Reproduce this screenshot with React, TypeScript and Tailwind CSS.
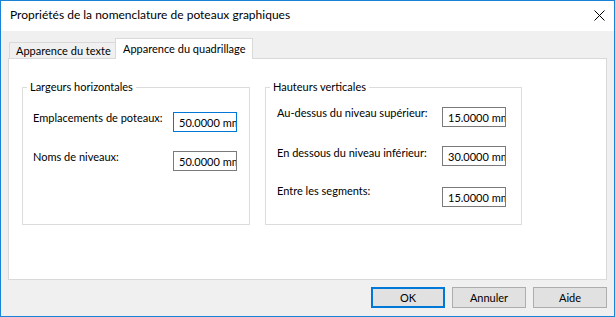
import React from 'react';

type Row = {
  label: string;
  value: string;
  rowClass: string;
  labelClass: string;
  focused?: boolean;
};

const leftRows: Row[] = [
  { label: "Emplacements de poteaux:", value: "50.0000 mm", rowClass: "mt-[17px]", labelClass: "-mt-[2px]", focused: true },
  { label: "Noms de niveaux:", value: "50.0000 mm", rowClass: "mt-[19px]", labelClass: "-mt-[2px]" },
];

const rightRows: Row[] = [
  { label: "Au-dessus du niveau supérieur:", value: "15.0000 mm", rowClass: "mt-[12px]", labelClass: "-mt-[2px]" },
  { label: "En dessous du niveau inférieur:", value: "30.0000 mm", rowClass: "mt-[19px]", labelClass: "-mt-[1px]" },
  { label: "Entre les segments:", value: "15.0000 mm", rowClass: "mt-[21px]", labelClass: "-mt-[4px]" },
];

function cn(...parts: (string | false | undefined)[]) {
  return parts.filter(Boolean).join(" ");
}

const GroupBox = ({
  title,
  rows,
  className,
  innerClass,
  labelWidth,
}: {
  title: string;
  rows: Row[];
  className: string;
  innerClass: string;
  labelWidth: string;
}) => (
  <fieldset className={`border border-[#dcdcdc] h-[146px] ${className}`}>
    <legend className="ml-[4px] px-[3px] leading-[16px]">{title}</legend>
    <div className={innerClass}>
      {rows.map((row) => (
        <div key={row.label} className={`flex items-start h-[20px] ${row.rowClass}`}>
          <span className={`leading-[16px] ${labelWidth} ${row.labelClass}`}>{row.label}</span>
          <input
            readOnly
            value={row.value}
            className={cn(
              "w-[64px] h-[20px] pl-[5px] pr-0 bg-white outline-none text-black leading-[16px]",
              row.focused ? "border border-[#0078d7]" : "border border-[#7a7a7a]"
            )}
          />
        </div>
      ))}
    </div>
  </fieldset>
);

const App = () => {
  return (
    <div
      className="w-[615px] h-[317px] flex flex-col border border-[#1883d7] bg-[#f0f0f0] text-[11px] text-black whitespace-nowrap overflow-hidden"
      style={{ fontFamily: 'Lato, "Segoe UI", sans-serif' }}
    >
      {/* Title bar */}
      <div className="h-[30px] bg-white flex items-start justify-between pl-[9px] pr-[9px] pt-[6px] shrink-0">
        <span className="leading-[16px] text-[12px]">Propriétés de la nomenclature de poteaux graphiques</span>
        <svg width="11" height="11" viewBox="0 0 11 11" className="mt-[3px]" stroke="#000" strokeWidth="1">
          <path d="M0.5 0.5 L10.5 10.5 M10.5 0.5 L0.5 10.5" />
        </svg>
      </div>

      {/* Body */}
      <div className="flex-1 flex flex-col px-[7px] pt-[7px]">
        {/* Tabs */}
        <div className="flex items-end h-[20px] ml-[1px]">
          <div className="h-[16px] w-[106px] border-l border-t border-[#d9d9d9] bg-[#f0f0f0] pl-[6px] flex items-center leading-[16px]">
            Apparence du texte
          </div>
          <div className="relative z-10 -mb-[1px] h-[21px] w-[138px] border-l border-r border-t border-[#d9d9d9] bg-white pl-[7px] pt-[2px] leading-[16px]">
            Apparence du quadrillage
          </div>
        </div>

        {/* Tab panel */}
        <div className="w-[599px] h-[222px] border border-[#d9d9d9] bg-white flex items-start pl-[13px] pt-[20px]">
          <GroupBox
            title="Largeurs horizontales"
            rows={leftRows}
            className="w-[228px]"
            innerClass="pl-[10px]"
            labelWidth="w-[140px]"
          />
          <GroupBox
            title="Hauteurs verticales"
            rows={rightRows}
            className="w-[257px] ml-[15px]"
            innerClass="pl-[11px]"
            labelWidth="w-[165px]"
          />
        </div>

        {/* Buttons */}
        <div className="flex justify-end gap-[7px] mt-[7px]">
          <button className="w-[74px] h-[21px] border-2 border-[#0078d7] bg-[#e1e1e1] leading-[16px]">OK</button>
          <button className="w-[74px] h-[21px] border border-[#adadad] bg-[#e1e1e1] leading-[16px]">Annuler</button>
          <button className="w-[74px] h-[21px] border border-[#adadad] bg-[#e1e1e1] leading-[16px]">Aide</button>
        </div>
      </div>
    </div>
  );
};

export default App;
